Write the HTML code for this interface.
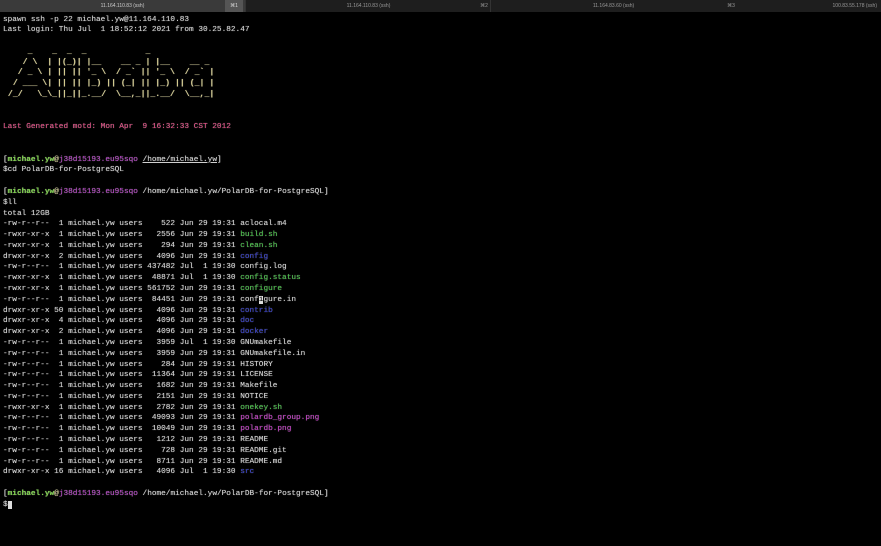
<!DOCTYPE html>
<html><head><meta charset="utf-8"><style>
html,body{margin:0;padding:0;background:#000;width:881px;height:546px;overflow:hidden}
.bar{position:absolute;left:0;top:0;width:881px;height:12px;background:#1e1e1e;font:5px "Liberation Sans",sans-serif;color:#999}
.bar div{position:absolute;top:0;height:12px;line-height:12px;text-align:center}
pre{position:absolute;left:3px;top:14.5px;margin:0;font-family:"Liberation Mono",monospace;font-size:7.75px;line-height:10.78px;color:#cfcfcf;white-space:pre;text-shadow:0 0 0.6px #aaa}
.y{color:#d4cb8e}.p{color:#e0457e}.g{color:#7ed34a;font-weight:bold}.m{color:#b23ec2}.u{text-decoration:underline}
.b{color:#2b35c8}.x{color:#3fbf3f}.k{color:#c234c4}.w{color:#eee}.c{background:#ddd;color:#000}
.art{font-weight:bold;font-size:8.2px}
</style></head><body>
<div class="bar">
<div style="left:0;width:245px;background:#3a3a3a;color:#ccc">11.164.110.83 (ssh)</div>
<div style="left:225px;width:18px;background:#555;color:#ddd">⌘1</div>
<div style="left:245px;width:245px;border-left:1px solid #333">11.164.110.83 (ssh)</div>
<div style="left:475px;width:18px">⌘2</div>
<div style="left:490px;width:245px;border-left:1px solid #333">11.164.83.60 (ssh)</div>
<div style="left:722px;width:18px">⌘3</div>
<div style="left:735px;width:146px;text-align:right;padding-right:4px;box-sizing:border-box">100.83.55.178 (ssh)</div>
</div>
<pre>spawn ssh -p 22 michael.yw@11.164.110.83
Last login: Thu Jul  1 18:52:12 2021 from 30.25.82.47

<span class="y art">     _    _  _  _            _            
    / \  | |(_)| |__    __ _ | |__    __ _ 
   / _ \ | || || '_ \  / _` || '_ \  / _` |
  / ___ \| || || |_) || (_| || |_) || (_| |
 /_/   \_\_||_||_.__/  \__,_||_.__/  \__,_|</span>


<span class="p">Last Generated motd: Mon Apr  9 16:32:33 CST 2012</span>


<span class="w">[</span><span class="g">michael.yw</span><span class="y">@</span><span class="m">j38d15193.eu95sqo</span> <span class="u">/home/michael.yw</span><span class="w">]</span>
$cd PolarDB-for-PostgreSQL

<span class="w">[</span><span class="g">michael.yw</span><span class="y">@</span><span class="m">j38d15193.eu95sqo</span> /home/michael.yw/PolarDB-for-PostgreSQL<span class="w">]</span>
$ll
total 12GB
-rw-r--r--  1 michael.yw users    522 Jun 29 19:31 aclocal.m4
-rwxr-xr-x  1 michael.yw users   2556 Jun 29 19:31 <span class="x">build.sh</span>
-rwxr-xr-x  1 michael.yw users    294 Jun 29 19:31 <span class="x">clean.sh</span>
drwxr-xr-x  2 michael.yw users   4096 Jun 29 19:31 <span class="b">config</span>
-rw-r--r--  1 michael.yw users 437482 Jul  1 19:30 config.log
-rwxr-xr-x  1 michael.yw users  48871 Jul  1 19:30 <span class="x">config.status</span>
-rwxr-xr-x  1 michael.yw users 561752 Jun 29 19:31 <span class="x">configure</span>
-rw-r--r--  1 michael.yw users  84451 Jun 29 19:31 conf<span class="c">i</span>gure.in
drwxr-xr-x 50 michael.yw users   4096 Jun 29 19:31 <span class="b">contrib</span>
drwxr-xr-x  4 michael.yw users   4096 Jun 29 19:31 <span class="b">doc</span>
drwxr-xr-x  2 michael.yw users   4096 Jun 29 19:31 <span class="b">docker</span>
-rw-r--r--  1 michael.yw users   3959 Jul  1 19:30 GNUmakefile
-rw-r--r--  1 michael.yw users   3959 Jun 29 19:31 GNUmakefile.in
-rw-r--r--  1 michael.yw users    284 Jun 29 19:31 HISTORY
-rw-r--r--  1 michael.yw users  11364 Jun 29 19:31 LICENSE
-rw-r--r--  1 michael.yw users   1682 Jun 29 19:31 Makefile
-rw-r--r--  1 michael.yw users   2151 Jun 29 19:31 NOTICE
-rwxr-xr-x  1 michael.yw users   2782 Jun 29 19:31 <span class="x">onekey.sh</span>
-rw-r--r--  1 michael.yw users  49093 Jun 29 19:31 <span class="k">polardb_group.png</span>
-rw-r--r--  1 michael.yw users  10049 Jun 29 19:31 <span class="k">polardb.png</span>
-rw-r--r--  1 michael.yw users   1212 Jun 29 19:31 README
-rw-r--r--  1 michael.yw users    728 Jun 29 19:31 README.git
-rw-r--r--  1 michael.yw users   8711 Jun 29 19:31 README.md
drwxr-xr-x 16 michael.yw users   4096 Jul  1 19:30 <span class="b">src</span>

<span class="w">[</span><span class="g">michael.yw</span><span class="y">@</span><span class="m">j38d15193.eu95sqo</span> /home/michael.yw/PolarDB-for-PostgreSQL<span class="w">]</span>
$<span class="c"> </span></pre>
</body></html>
